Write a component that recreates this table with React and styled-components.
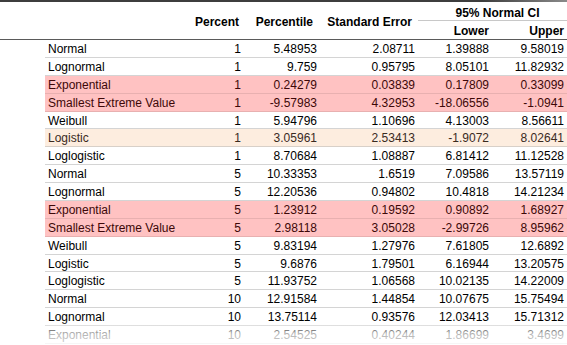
import React from 'react';
import styled, { createGlobalStyle } from 'styled-components';

const GlobalStyle = createGlobalStyle`
  html, body {
    margin: 0;
    padding: 0;
    background: #ffffff;
  }
  body {
    font-family: "Liberation Sans", Arial, sans-serif;
    font-size: 12px;
    color: #000;
  }
`;

const COLS = '125px 74px 76px 98px 74px 75px';

const Page = styled.div`
  position: relative;
  width: 567px;
  height: 345px;
  overflow: hidden;
  background: #fff;
`;

const TopBar = styled.div`
  height: 2px;
  background: linear-gradient(to right, #3d3d3d 0%, #3d3d3d 85%, #8a8a8a 100%);
`;

const Header = styled.div`
  display: grid;
  grid-template-columns: 45px ${COLS};
  grid-template-rows: 19px 18px;
  border-bottom: 1px solid #5a5a5a;
  font-weight: bold;
`;

const HeadCell = styled.div`
  grid-row: ${(p) => p.$row || '1 / span 2'};
  grid-column: ${(p) => p.$col};
  display: flex;
  align-items: center;
  justify-content: ${(p) => (p.$center ? 'center' : 'flex-end')};
  padding-right: ${(p) => (p.$center ? 0 : p.$pr || 3)}px;
  padding-top: ${(p) => p.$pt || 0}px;
  white-space: nowrap;
`;

const GroupHead = styled(HeadCell)`
  border-bottom: 1px solid #c8c8c8;
  padding-left: 10px;
`;

const Body = styled.div`
  margin-left: 45px;
`;

const tones = {
  plain: { bg: '#ffffff', fg: '#000000', line: '#d4d4d4' },
  alert: { bg: '#ffc2c2', fg: '#3d0808', line: '#e8b0b0' },
  soft: { bg: '#fdeddf', fg: '#3a2a1e', line: '#d8d0c8' },
};

const Row = styled.div`
  display: grid;
  grid-template-columns: ${COLS};
  height: 17.875px;
  box-sizing: border-box;
  align-items: center;
  padding-top: 1px;
  background: ${(p) => tones[p.$tone].bg};
  color: ${(p) => tones[p.$tone].fg};
  border-bottom: 1px solid ${(p) => tones[p.$tone].line};
  line-height: 16px;
`;

const Name = styled.div`
  padding-left: 3px;
  white-space: nowrap;
`;

const Num = styled.div`
  text-align: right;
  padding-right: 3px;
  white-space: nowrap;
`;

const Fade = styled.div`
  position: absolute;
  left: 0;
  right: 0;
  bottom: 0;
  height: 24px;
  background: linear-gradient(to bottom, rgba(255, 255, 255, 0) 0%, rgba(255, 255, 255, 0.72) 55%, rgba(255, 255, 255, 0.8) 100%);
  pointer-events: none;
`;

const rows = [
  ['Normal', 1, '5.48953', '2.08711', '1.39888', '9.58019'],
  ['Lognormal', 1, '9.759', '0.95795', '8.05101', '11.82932'],
  ['Exponential', 1, '0.24279', '0.03839', '0.17809', '0.33099', 'alert'],
  ['Smallest Extreme Value', 1, '-9.57983', '4.32953', '-18.06556', '-1.0941', 'alert'],
  ['Weibull', 1, '5.94796', '1.10696', '4.13003', '8.56611'],
  ['Logistic', 1, '3.05961', '2.53413', '-1.9072', '8.02641', 'soft'],
  ['Loglogistic', 1, '8.70684', '1.08887', '6.81412', '11.12528'],
  ['Normal', 5, '10.33353', '1.6519', '7.09586', '13.57119'],
  ['Lognormal', 5, '12.20536', '0.94802', '10.4818', '14.21234'],
  ['Exponential', 5, '1.23912', '0.19592', '0.90892', '1.68927', 'alert'],
  ['Smallest Extreme Value', 5, '2.98118', '3.05028', '-2.99726', '8.95962', 'alert'],
  ['Weibull', 5, '9.83194', '1.27976', '7.61805', '12.6892'],
  ['Logistic', 5, '9.6876', '1.79501', '6.16944', '13.20575'],
  ['Loglogistic', 5, '11.93752', '1.06568', '10.02135', '14.22009'],
  ['Normal', 10, '12.91584', '1.44854', '10.07675', '15.75494'],
  ['Lognormal', 10, '13.75114', '0.93576', '12.03413', '15.71312'],
  ['Exponential', 10, '2.54525', '0.40244', '1.86699', '3.4699'],
];

export default function App() {
  return (
    <Page>
      <GlobalStyle />
      <TopBar />
      <Header>
        <HeadCell $col="3" $pr={5} $pt={2}>Percent</HeadCell>
        <HeadCell $col="4" $pr={7} $pt={2}>Percentile</HeadCell>
        <HeadCell $col="5" $pr={6} $pt={2}>Standard Error</HeadCell>
        <GroupHead $col="6 / span 2" $row="1" $center $pt={3}>95% Normal CI</GroupHead>
        <HeadCell $col="6" $row="2" $pt={1}>Lower</HeadCell>
        <HeadCell $col="7" $row="2" $pt={1}>Upper</HeadCell>
      </Header>
      <Body>
        {rows.map(([name, pct, pctl, se, lo, hi, tone], i) => (
          <Row key={i} $tone={tone || 'plain'}>
            <Name>{name}</Name>
            <Num>{pct}</Num>
            <Num>{pctl}</Num>
            <Num>{se}</Num>
            <Num>{lo}</Num>
            <Num>{hi}</Num>
          </Row>
        ))}
      </Body>
      <Fade />
    </Page>
  );
}
